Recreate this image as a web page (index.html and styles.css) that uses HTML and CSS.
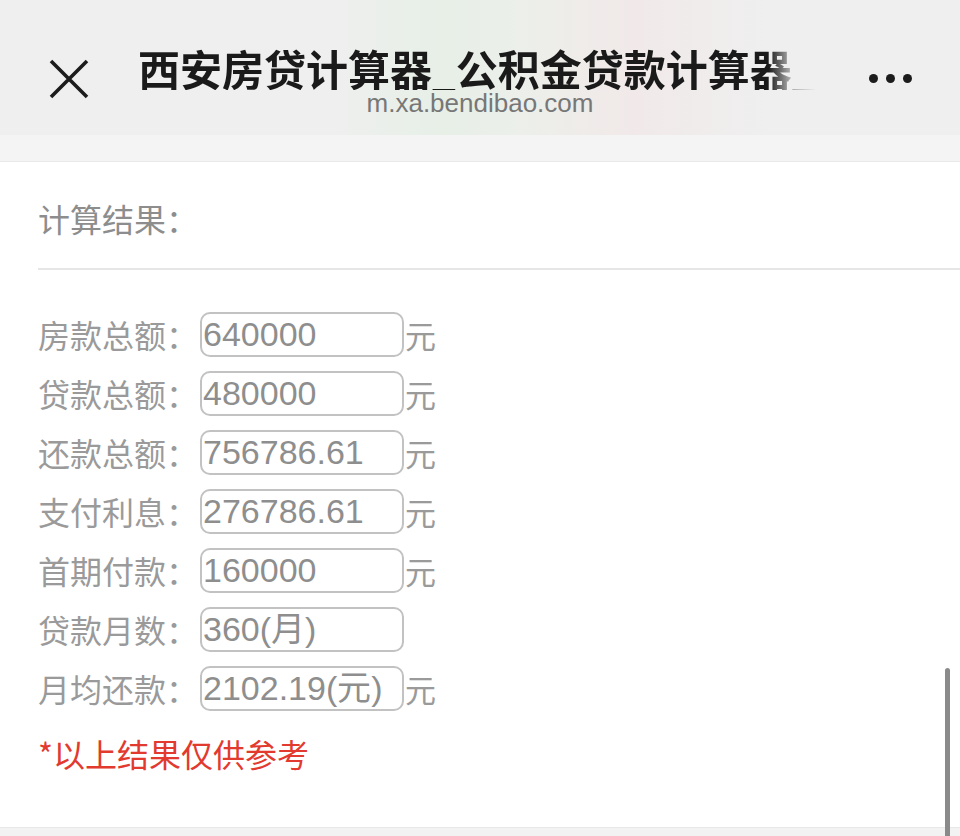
FILE: index.html
```html
<!DOCTYPE html>
<html lang="zh-CN">
<head>
<meta charset="utf-8">
<title>西安房贷计算器</title>
<link rel="stylesheet" href="styles.css">
</head>
<body>
<div class="screen">
  <header class="topbar">
    <div class="close">
      <svg width="40" height="40" viewBox="0 0 40 40"><path d="M2 2 L38 38 M38 2 L2 38" stroke="#1c1c1c" stroke-width="3.6" stroke-linecap="butt" fill="none"/></svg>
    </div>
    <div class="titles">
      <div class="title">西安房贷计算器_公积金贷款计算器_</div>
      <div class="url">m.xa.bendibao.com</div>
    </div>
    <div class="more"><span></span><span></span><span></span></div>
  </header>
  <div class="band"></div>
  <main class="content">
    <div class="result-title">计算结果：</div>
    <div class="divider"></div>
    <div class="rows">
      <div class="row"><span class="label">房款总额：</span><span class="field">640000</span><span class="unit">元</span></div>
      <div class="row"><span class="label">贷款总额：</span><span class="field">480000</span><span class="unit">元</span></div>
      <div class="row"><span class="label">还款总额：</span><span class="field">756786.61</span><span class="unit">元</span></div>
      <div class="row"><span class="label">支付利息：</span><span class="field">276786.61</span><span class="unit">元</span></div>
      <div class="row"><span class="label">首期付款：</span><span class="field">160000</span><span class="unit">元</span></div>
      <div class="row"><span class="label">贷款月数：</span><span class="field">360(月)</span></div>
      <div class="row"><span class="label">月均还款：</span><span class="field">2102.19(元)</span><span class="unit">元</span></div>
    </div>
    <div class="note">*以上结果仅供参考</div>
  </main>
  <div class="footer-band"></div>
  <div class="scrollbar"></div>
</div>
</body>
</html>
```
FILE: styles.css
```css
html, body {
  margin: 0;
  padding: 0;
  background: #ffffff;
}
.screen {
  position: relative;
  width: 960px;
  height: 836px;
  overflow: hidden;
  display: flex;
  flex-direction: column;
  font-family: "Noto Sans CJK SC", "Noto Sans", sans-serif;
}
.topbar {
  height: 135px;
  flex: none;
  display: flex;
  align-items: flex-start;
  background: linear-gradient(90deg, #efefef 0%, #efefef 34%, #e7efe7 46%, #ecefea 54%, #f1e9e9 66%, #efefef 80%, #efefef 100%);
}
.close {
  width: 138px;
  flex: none;
  padding: 59px 0 0 49px;
  box-sizing: border-box;
}
.close svg { display: block; }
.titles {
  width: 684px;
  flex: none;
  display: flex;
  flex-direction: column;
  align-items: center;
  padding-top: 46px;
}
.title {
  align-self: flex-start;
  white-space: nowrap;
  font-size: 42px;
  line-height: 44px;
  height: 44px;
  font-weight: 700;
  color: #1a1a1a;
  -webkit-mask-image: linear-gradient(90deg, #000 0%, #000 93%, rgba(0,0,0,0.35) 96%, transparent 100%);
  mask-image: linear-gradient(90deg, #000 0%, #000 93%, rgba(0,0,0,0.35) 96%, transparent 100%);
}
.url {
  font-family: "Liberation Sans", Arial, sans-serif;
  font-size: 26px;
  line-height: 26px;
  color: #777777;
}
.more {
  flex: 1;
  display: flex;
  justify-content: flex-end;
  gap: 8px;
  padding: 74px 48px 0 0;
  box-sizing: border-box;
}
.more span {
  flex: none;
  width: 9px;
  height: 9px;
  border-radius: 50%;
  background: #1c1c1c;
}
.band {
  height: 26px;
  flex: none;
  background: #f4f4f4;
  border-bottom: 1px solid #e9e9e9;
}
.content {
  flex: 1;
  padding-left: 38px;
}
.result-title {
  height: 106px;
  box-sizing: border-box;
  padding-top: 34px;
  font-size: 32px;
  line-height: 44px;
  color: #8d8d8d;
}
.divider {
  height: 2px;
  background: #e6e6e6;
}
.rows {
  margin-top: 42px;
  display: flex;
  flex-direction: column;
  gap: 14px;
}
.row {
  display: flex;
  align-items: center;
  height: 45px;
}
.label {
  width: 162px;
  flex: none;
  font-size: 32px;
  line-height: 45px;
  color: #9a9a9a;
  white-space: nowrap;
  overflow: hidden;
}
.field {
  width: 204px;
  height: 45px;
  box-sizing: border-box;
  border: 2px solid #c2c2c2;
  border-radius: 10px;
  padding-left: 1px;
  font-family: "Liberation Sans", Arial, sans-serif;
  font-size: 34px;
  line-height: 41px;
  color: #8e8e8e;
  white-space: nowrap;
  overflow: hidden;
}
.unit {
  font-size: 31px;
  line-height: 45px;
  color: #9a9a9a;
  margin-left: 1px;
}
.note {
  margin-top: 22px;
  font-size: 32px;
  line-height: 40px;
  color: #e23a2f;
}
.footer-band {
  height: 8px;
  flex: none;
  background: #f2f2f2;
  border-top: 1px solid #e8e8e8;
}
.scrollbar {
  position: absolute;
  left: 945px;
  top: 668px;
  width: 5px;
  height: 180px;
  border-radius: 3px;
  background: #8a8a8a;
}
```
